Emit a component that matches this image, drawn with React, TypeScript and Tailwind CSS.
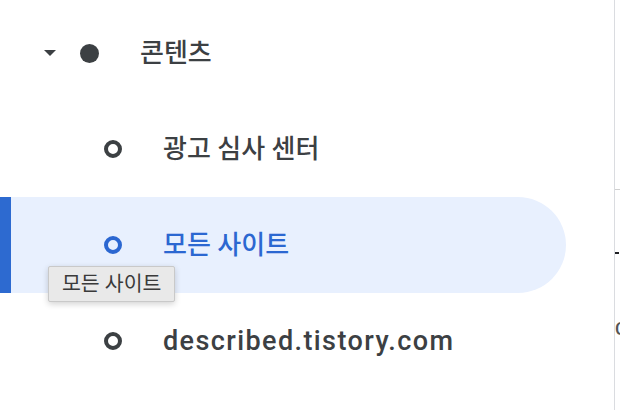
import React from "react";

const font = { fontFamily: 'Roboto, "Noto Sans CJK KR", sans-serif' };

function Ring({ active }: { active?: boolean }) {
  return (
    <span
      className={`block w-[18px] h-[18px] rounded-full border-[4px] shrink-0 ${
        active ? "border-[#2b67d1]" : "border-[#3c4043]"
      }`}
    />
  );
}

function ChildRow({ label, active, latin }: { label: string; active?: boolean; latin?: boolean }) {
  return (
    <div className="relative h-[96px] flex items-center">
      {active && (
        <div className="absolute inset-y-0 left-0 w-[566px] rounded-r-full bg-[#e8f0fe]">
          <div className="w-[11px] h-full bg-[#2d6ad0]" />
        </div>
      )}
      <div className="relative flex items-center pl-[104px] gap-[41px]">
        <Ring active={active} />
        <span
          className={`font-medium leading-none ${
            latin ? "text-[27px] tracking-[1.4px]" : "text-[26px]"
          } ${active ? "text-[#2b67d1]" : "text-[#3c4043]"}`}
        >
          {label}
        </span>
      </div>
    </div>
  );
}

export default function App() {
  return (
    <div className="w-[620px] h-[410px] bg-white flex overflow-hidden" style={font}>
      <div className="relative w-[614px] shrink-0 pt-[5px]">
        <div className="h-[96px] flex items-center pl-[44px]">
          <svg viewBox="0 0 12 6" className="w-[12px] h-[6px] shrink-0">
            <polygon points="0,0 12,0 6,6" fill="#3c4043" />
          </svg>
          <span className="ml-[24px] block w-[19px] h-[19px] rounded-full bg-[#3c4043] shrink-0" />
          <span className="ml-[41px] text-[26px] font-medium leading-none text-[#3c4043]">
            콘텐츠
          </span>
        </div>
        <ChildRow label="광고 심사 센터" />
        <ChildRow label="모든 사이트" active />
        <ChildRow label="described.tistory.com" latin />

        <div className="absolute left-[48px] top-[266px] h-[36px] px-[13px] flex items-center bg-[#e9e9e9] border border-[#c9c9c9] rounded-[2px] shadow-[0_2px_6px_rgba(0,0,0,0.18)]">
          <span className="text-[20.5px] leading-none text-[#3a3a3a]">모든 사이트</span>
        </div>
      </div>
      <div className="w-px shrink-0 bg-[#dadce0]" />
      <div className="w-[5px] shrink-0 overflow-hidden flex flex-col">
        <div className="h-[189px] shrink-0" />
        <div className="h-px shrink-0 bg-[#d0d0d0]" />
        <div className="h-[62px] shrink-0" />
        <div className="h-[2px] w-[4px] shrink-0 bg-[#202124]" />
        <div className="h-[66px] shrink-0" />
        <div className="text-[18px] leading-none text-[#555] font-medium">C</div>
      </div>
    </div>
  );
}
